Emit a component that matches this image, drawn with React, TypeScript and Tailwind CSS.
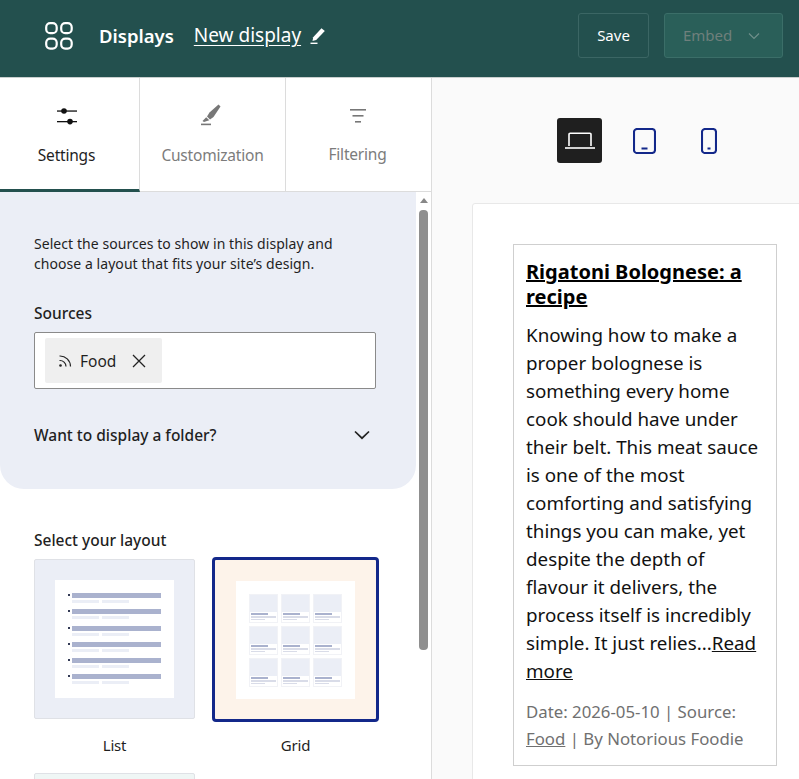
import React from "react";

const font = { fontFamily: '"Noto Sans", "Open Sans", sans-serif' };

function ListThumb() {
  return (
    <div className="w-[119px] h-[118px] bg-white flex flex-col gap-[4px] pl-[13px] pt-[13px]">
      {[0, 1, 2, 3, 4, 5].map((i) => (
        <div key={i} className="flex items-start gap-[2px] h-[12.3px]">
          <div className="w-[2px] h-[2px] mt-[1px] bg-[#333a55]" />
          <div className="flex flex-col gap-[2px]">
            <div className="w-[89px] h-[5px] bg-[#aab2ce]" />
            <div className="flex gap-[3px]">
              <div className="w-[27px] h-[3px] bg-[#ebeef6]" />
              <div className="w-[27px] h-[3px] bg-[#ebeef6]" />
            </div>
          </div>
        </div>
      ))}
    </div>
  );
}

function GridThumb() {
  return (
    <div className="w-[119px] h-[118px] bg-white grid grid-cols-3 content-start gap-x-[3px] gap-y-[3px] pl-[13px] pr-[13px] pt-[13px]">
      {[0, 1, 2, 3, 4, 5, 6, 7, 8].map((i) => (
        <div key={i} className="h-[29px] border border-[#f1f2f6] flex flex-col">
          <div className="h-[17px] bg-[#ebeef6]" />
          <div className="flex flex-col gap-[1px] pl-[1px] pt-[1px]">
            <div className="w-[17px] h-[2px] bg-[#aab2ce]" />
            <div className="w-[25px] h-[2px] bg-[#d9dce8]" />
            <div className="w-[14px] h-[1px] bg-[#d9dce8]" />
          </div>
        </div>
      ))}
    </div>
  );
}

export default function App() {
  return (
    <div style={font} className="h-screen w-full overflow-hidden flex flex-col bg-white text-[#1f1f1f]">
      <header className="h-[78px] shrink-0 bg-[#23504e] border-b border-[#c9cfce] flex items-center pl-[45px] pr-[16px] pb-[6px]">
        <svg width="28" height="28" viewBox="0 0 28 28" fill="none" stroke="#fff" strokeWidth="2.2" className="mr-[26px]">
          <rect x="1.2" y="1.2" width="10.5" height="10" rx="4" />
          <rect x="16.2" y="1.2" width="10.5" height="10" rx="4" />
          <rect x="1.2" y="16.6" width="10.5" height="10" rx="4" />
          <rect x="16.2" y="16.6" width="10.5" height="10" rx="4" />
        </svg>
        <span className="text-[18.5px] font-semibold text-white">Displays</span>
        <span className="ml-[20px] text-[19px] text-white underline underline-offset-[3px]">New display</span>
        <svg width="16" height="18" viewBox="0 0 16 18" className="ml-[9px]" fill="#fff">
          <path d="M11.5 1.2 14.8 4 6.2 13 2.5 14 3.2 10.2Z" />
          <rect x="0.5" y="15.6" width="7" height="1.4" />
        </svg>
        <div className="flex-1" />
        <div className="w-[71px] h-[45px] rounded-[3px] border border-[#3b6664] flex items-center justify-center text-[15px] text-white">Save</div>
        <div className="ml-[15px] w-[119px] h-[45px] rounded-[3px] border border-[#3b6e68] bg-[#2a5f59] flex items-center pl-[18px] gap-[16px] text-[15px] text-[#6f7f7c]">
          <span>Embed</span>
          <svg width="12" height="8" viewBox="0 0 12 8" fill="none" stroke="#6f8f8a" strokeWidth="1.2"><path d="M1 1.5 6 6.5 11 1.5" /></svg>
        </div>
      </header>

      <div className="flex-1 flex min-h-0">
        <aside className="w-[432px] shrink-0 border-r border-[#dcdcdc] flex flex-col">
          <div className="h-[114px] shrink-0 flex border-b border-[#dcdcdc]">
            <div className="w-[140px] border-r border-[#dcdcdc] border-b-[3px] border-b-[#23504e] h-[114px] flex flex-col items-center pt-[28px] pr-[6px]">
              <svg width="22" height="20" viewBox="0 0 22 20" fill="#111" className="mb-[18px]">
                <rect x="1" y="4.4" width="20" height="1.3" />
                <circle cx="8" cy="5" r="2.8" />
                <rect x="1" y="15" width="20" height="1.3" />
                <circle cx="14" cy="15.6" r="2.8" />
              </svg>
              <span className="text-[15.5px] text-[#1f1f1f] tracking-[-0.2px]">Settings</span>
            </div>
            <div className="w-[146px] border-r border-[#dcdcdc] flex flex-col items-center pt-[26px]">
              <svg width="22" height="22" viewBox="0 0 22 22" className="mb-[18px] -ml-[3px]" fill="#777">
                <path d="M18.5 0.5 20.5 2.5 13.5 13 10 15.5 7 12.5 9.5 8.5Z" />
                <path d="M6.2 13.2 9.3 16.2 4 18 2.5 17Z" />
                <rect x="1" y="19.6" width="10" height="1.6" />
              </svg>
              <span className="text-[15.5px] text-[#7c7c7c] tracking-[-0.2px]">Customization</span>
            </div>
            <div className="flex-1 flex flex-col items-center pt-[28px] pr-[2px]">
              <svg width="18" height="20" viewBox="0 0 18 20" fill="#777" className="mb-[17px]">
                <rect x="1" y="3" width="16" height="1.6" />
                <rect x="3.5" y="9" width="11" height="1.6" />
                <rect x="6" y="15" width="6" height="1.6" />
              </svg>
              <span className="text-[15.5px] text-[#7c7c7c] tracking-[-0.2px]">Filtering</span>
            </div>
          </div>

          <div className="flex-1 flex min-h-0 overflow-hidden">
            <div className="w-[416px] shrink-0">
              <div className="h-[297px] bg-[#ebeef6] rounded-br-[24px] rounded-bl-[24px] pl-[34px] pr-[40px] pt-[42px]">
                <p className="text-[14px] leading-[20px] tracking-[0.06px] text-[#1f1f1f] whitespace-nowrap">Select the sources to show in this display and<br />choose a layout that fits your site’s design.</p>
                <div className="mt-[29px] text-[15.5px] font-medium leading-[20px]">Sources</div>
                <div className="mt-[9px] h-[57px] w-[342px] bg-white border border-[#8a8a8a] rounded-[2px] flex items-center pl-[10px]">
                  <div className="h-[45px] w-[117px] bg-[#efefef] rounded-[2px] flex items-center pl-[13px]">
                    <svg width="15" height="15" viewBox="0 0 15 15" fill="none" stroke="#222" strokeWidth="1.2">
                      <circle cx="2.5" cy="12.5" r="1.3" fill="#222" stroke="none" />
                      <path d="M1.5 7.5a6 6 0 0 1 6.5 6" />
                      <path d="M1.5 3a10.5 10.5 0 0 1 11 10.5" />
                    </svg>
                    <span className="ml-[7px] text-[15.5px] pt-[2px]">Food</span>
                    <svg width="14" height="14" viewBox="0 0 14 14" stroke="#222" strokeWidth="1.3" className="ml-[16px]"><path d="M1 1 13 13M13 1 1 13" /></svg>
                  </div>
                </div>
                <div className="mt-[36px] flex items-center justify-between pr-[6px]">
                  <span className="text-[15.5px] font-medium leading-[20px]">Want to display a folder?</span>
                  <svg width="16" height="10" viewBox="0 0 16 10" fill="none" stroke="#222" strokeWidth="1.7"><path d="M1 1.5 8 8.2 15 1.5" /></svg>
                </div>
              </div>
              <div className="pl-[34px] pt-[41px]">
                <div className="text-[15.5px] font-medium leading-[20px]">Select your layout</div>
                <div className="mt-[9px] flex gap-[17px]">
                  <div className="flex flex-col items-center">
                    <div className="w-[161px] h-[160px] bg-[#ebeef6] border border-[#dfe1e6] rounded-[2px] flex items-center justify-center"><ListThumb /></div>
                    <div className="mt-[16px] text-[15px] leading-[20px] tracking-[-0.2px]">List</div>
                  </div>
                  <div className="flex flex-col items-center">
                    <div className="w-[167px] h-[165px] -mt-[2px] mb-[-3px] bg-[#fdf3ea] border-[3px] border-[#13288a] rounded-[4px] flex items-center justify-center"><GridThumb /></div>
                    <div className="mt-[16px] text-[15px] leading-[20px] tracking-[-0.2px]">Grid</div>
                  </div>
                </div>
                <div className="mt-[18px] w-[161px] h-[40px] bg-[#eff6f5] border border-[#dfe1e6] rounded-[2px]" />
              </div>
            </div>
            <div className="w-[15px] shrink-0 flex flex-col items-center pt-[18px]">
              <div className="w-0 h-0 border-l-[4px] border-r-[4px] border-b-[5px] border-l-transparent border-r-transparent border-b-[#888] mb-[5px] -mt-[12px]" />
              <div className="w-[9px] h-[440px] mt-[2px] rounded-[4px] bg-[#8f8f8f]" />
            </div>
          </div>
        </aside>

        <main className="flex-1 bg-[#fafafa] min-w-0 overflow-hidden">
          <div className="h-[125px] flex items-start pt-[40px] pl-[125px]">
            <div className="w-[45px] h-[45px] rounded-[3px] bg-[#1f1f1f] flex items-center justify-center">
              <svg width="32" height="20" viewBox="0 0 32 20" fill="none" stroke="#fff" strokeWidth="1.6">
                <path d="M5 15V3.5A1.2 1.2 0 0 1 6.2 2.2H25.8A1.2 1.2 0 0 1 27 3.5V15" />
                <path d="M1 17H31" />
              </svg>
            </div>
            <div className="ml-[31px] mt-[10px]">
              <svg width="23" height="26" viewBox="0 0 23 26" fill="none" stroke="#13288a" strokeWidth="2.1">
                <rect x="1" y="1" width="21" height="24" rx="3" />
                <path d="M8.5 20.5H14.5" strokeWidth="2" />
              </svg>
            </div>
            <div className="ml-[45px] mt-[10px]">
              <svg width="16" height="26" viewBox="0 0 16 26" fill="none" stroke="#13288a" strokeWidth="2.1">
                <rect x="1" y="1" width="14" height="24" rx="3" />
                <path d="M6.5 20.5H9.5" strokeWidth="2" />
              </svg>
            </div>
          </div>
          <div className="ml-[40px] w-[400px] h-[600px] bg-white border border-[#e8e8e8] rounded-[3px] pl-[40px] pt-[40px]">
            <div className="w-[264px] h-[522px] border border-[#cfcfcf] px-[12px] pt-[14px]">
              <div className="text-[20px] leading-[25px] font-bold underline text-black">Rigatoni Bolognese: a recipe</div>
              <p className="mt-[12px] text-[18.8px] leading-[28px] text-[#111]">
                Knowing how to make a proper bolognese is something every home cook should have under their belt. This meat sauce is one of the most comforting and satisfying things you can make, yet despite the depth of flavour it delivers, the process itself is incredibly simple. It just relies...<span className="underline">Read more</span>
              </p>
              <p className="mt-[13px] text-[16.8px] leading-[27px] text-[#707070]">Date: 2026-05-10 | Source: <span className="underline">Food</span> | By Notorious Foodie</p>
            </div>
          </div>
        </main>
      </div>
    </div>
  );
}
